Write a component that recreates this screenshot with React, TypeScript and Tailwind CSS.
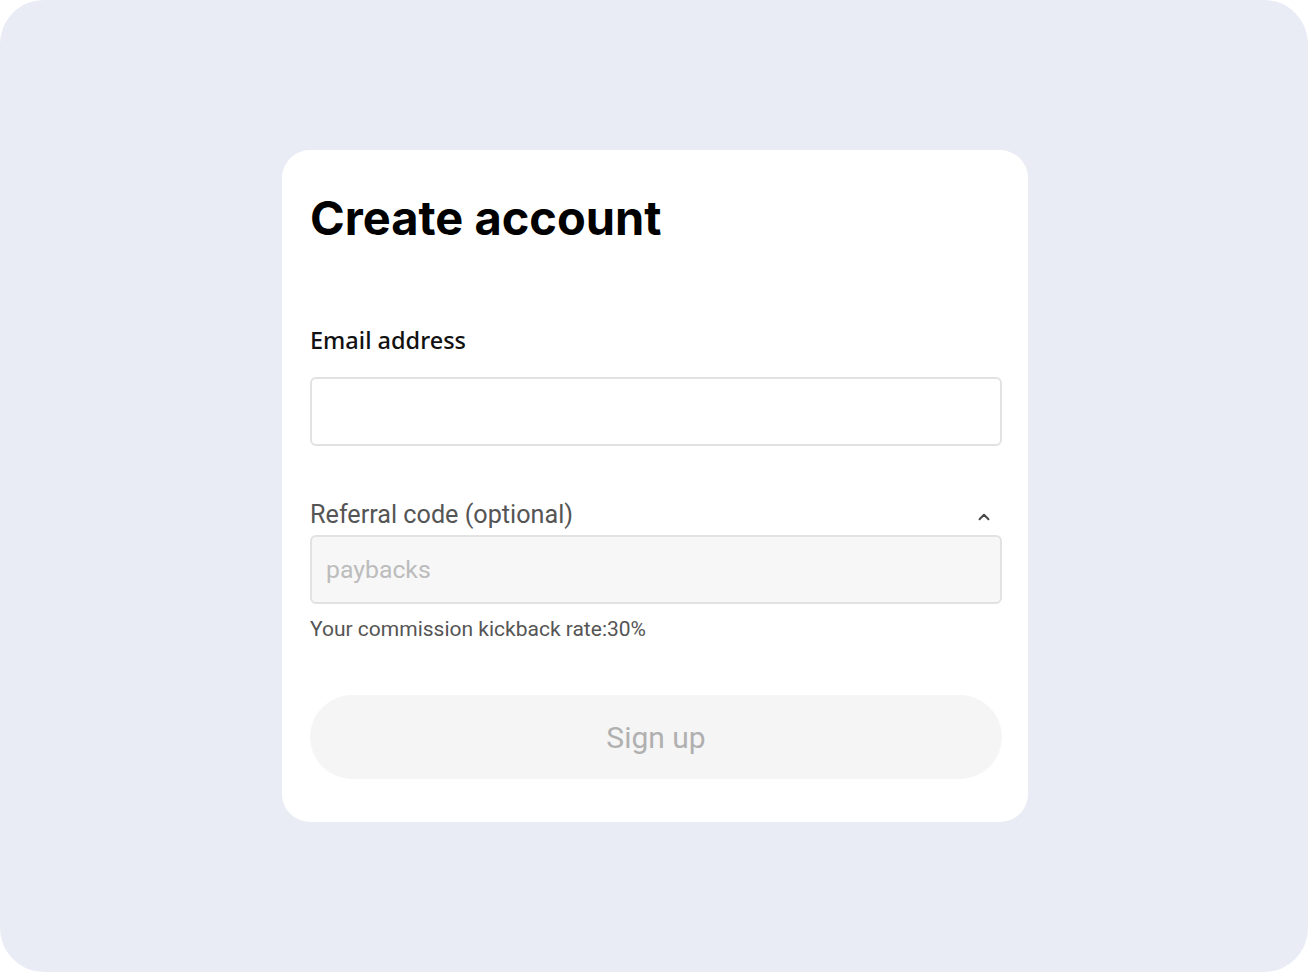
import React from "react";

export default function App() {
  return (
    <div className="w-[1308px] h-[972px] bg-white" style={{ fontFamily: '"Noto Sans", Roboto, sans-serif' }}>
      <div className="w-full h-full rounded-[44px] bg-[#e9ecf4] flex flex-col pl-[282px] pt-[150px]">
        <div className="w-[746px] h-[672px] bg-white rounded-[28px] pl-[28px] pr-[26px] pt-[38px] flex flex-col">
          <h1 className="text-[47px] leading-[60px] font-bold text-black" style={{ fontFamily: 'Inter, "Noto Sans", sans-serif' }}>
            Create account
          </h1>
          <label className="mt-[77px] text-[23.5px] leading-[30px] font-medium text-[#111]">Email address</label>
          <div className="mt-[22px] h-[69px] border-2 border-[#e2e2e2] rounded-[6px] bg-white" />
          <div className="mt-[52px] flex items-center justify-between h-[34px]">
            <span className="text-[25.2px] leading-[34px] text-[#555]" style={{ fontFamily: 'Roboto, sans-serif' }}>Referral code (optional)</span>
            <svg width="18" height="18" viewBox="0 0 24 24" fill="none" stroke="#444" strokeWidth="2.5" strokeLinecap="round" strokeLinejoin="round" className="mr-[9px] mt-[4px]">
              <path d="M6 15l6-6 6 6" />
            </svg>
          </div>
          <div className="mt-[3px] h-[69px] border-2 border-[#e2e2e2] rounded-[6px] bg-[#f7f7f7] flex items-center pl-[14px]">
            <span className="text-[24.8px] text-[#bcbcbc]" style={{ fontFamily: 'Roboto, sans-serif' }}>paybacks</span>
          </div>
          <p className="mt-[11px] text-[21px] leading-[28px] text-[#555]" style={{ fontFamily: 'Roboto, sans-serif' }}>
            Your commission kickback rate:30%
          </p>
          <button className="mt-[52px] h-[84px] w-full rounded-full bg-[#f5f5f5] text-[30px] text-[#b0b0b0]" style={{ fontFamily: 'Roboto, sans-serif' }}>
            Sign up
          </button>
        </div>
      </div>
    </div>
  );
}
